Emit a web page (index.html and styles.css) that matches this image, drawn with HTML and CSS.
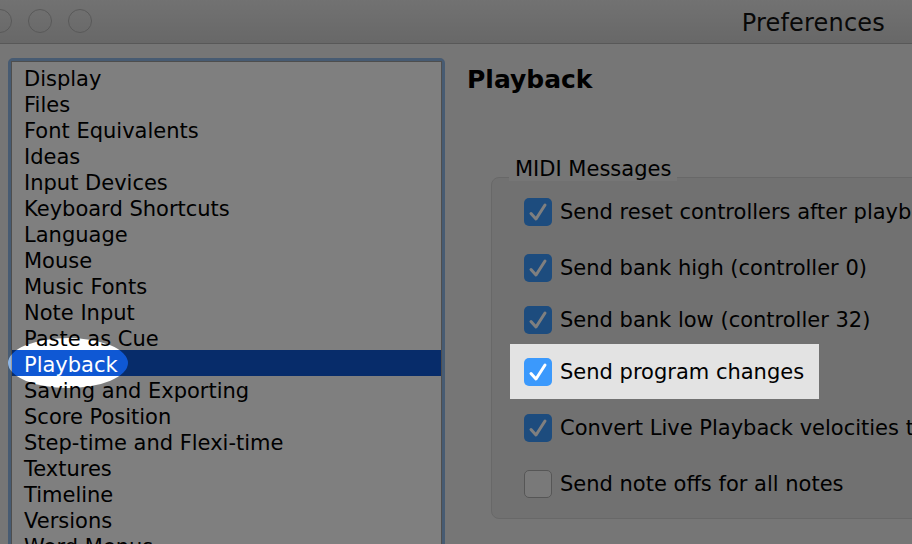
FILE: index.html
```html
<!DOCTYPE html>
<html lang="en">
<head>
  <meta charset="UTF-8">
  <meta name="viewport" content="width=device-width, initial-scale=1.0">
  <title>Preferences</title>
  <link rel="stylesheet" href="styles.css">
</head>
<body>
  <div class="window">
    <div class="titlebar">
      <div class="lights">
        <span class="light"></span>
        <span class="light"></span>
        <span class="light"></span>
      </div>
      <div class="title">Preferences</div>
    </div>

    <div class="main">
      <div class="list-ring">
        <ul class="list">
          <li>Display</li>
          <li>Files</li>
          <li>Font Equivalents</li>
          <li>Ideas</li>
          <li>Input Devices</li>
          <li>Keyboard Shortcuts</li>
          <li>Language</li>
          <li>Mouse</li>
          <li>Music Fonts</li>
          <li>Note Input</li>
          <li>Paste as Cue</li>
          <li class="selected">Playback</li>
          <li>Saving and Exporting</li>
          <li>Score Position</li>
          <li>Step-time and Flexi-time</li>
          <li>Textures</li>
          <li>Timeline</li>
          <li>Versions</li>
          <li>Word Menus</li>
        </ul>
      </div>

      <div class="pane">
        <h1>Playback</h1>
        <div class="group-label">MIDI Messages</div>
        <div class="group">
          <label class="option"><span class="check on"></span>Send reset controllers after playback</label>
          <label class="option wide"><span class="check on"></span>Send bank high (controller 0)</label>
          <label class="option"><span class="check on"></span>Send bank low (controller 32)</label>
          <label class="option"><span class="check on"></span>Send program changes</label>
          <label class="option wide"><span class="check on"></span>Convert Live Playback velocities to MIDI</label>
          <label class="option wide"><span class="check"></span>Send note offs for all notes</label>
        </div>
      </div>
    </div>
  </div>

  <!-- dim everything except the two highlighted spots -->
  <svg class="dim" width="912" height="544" viewBox="0 0 912 544">
    <path fill-rule="evenodd" d="M0 0H912V544H0Z M8 363a60 25 0 1 0 120 0a60 25 0 1 0 -120 0Z M510 344H819V399H510Z"/>
  </svg>
</body>
</html>
```

FILE: styles.css
```css
* {
  box-sizing: border-box;
  margin: 0;
  padding: 0;
}
body {
  font-family: 'DejaVu Sans', Verdana, sans-serif;
  width: 912px;
  height: 544px;
  overflow: hidden;
  background: #ececec;
  color: #000;
  position: relative;
}
.titlebar {
  height: 44px;
  display: flex;
  align-items: center;
  background: linear-gradient(#e4e4e4, #d0d0d0);
  border-bottom: 1px solid #b0b0b0;
}
.lights {
  display: flex;
  gap: 16px;
  margin-left: -12px;
  margin-top: -1px;
}
.light {
  width: 24px;
  height: 24px;
  border-radius: 50%;
  border: 1.5px solid #b2b2b2;
}
.title {
  margin-left: auto;
  padding: 3px 27px 0 0;
  font-size: 24px;
  letter-spacing: 0.2px;
  color: #111;
}
.main {
  display: flex;
  gap: 22px;
}
.list-ring {
  width: 437px;
  height: 520px;
  margin-left: 8px;
  margin-top: 14px;
  border: 3px solid #8fb6e4;
  border-radius: 5px;
  flex-shrink: 0;
}
.list {
  list-style: none;
  height: 100%;
  background: #fff;
  border: 1px solid #9c9c9c;
  padding-top: 2px;
}
.list li {
  height: 26px;
  line-height: 26px;
  padding: 2px 0 0 12px;
  font-size: 21px;
  white-space: nowrap;
}
.list li.selected {
  background: #0f58d4;
  color: #fff;
}
.pane {
  flex: 1;
  padding-top: 21px;
  white-space: nowrap;
}
.pane h1 {
  font-size: 25px;
  line-height: 30px;
  font-weight: bold;
}
.group-label {
  width: fit-content;
  position: relative;
  margin: 62px 0 -4px 42px;
  padding: 0 6px;
  font-size: 21px;
  line-height: 24px;
  background: #ececec;
}
.group {
  width: 520px;
  margin-left: 24px;
  padding: 20px 0 20px 32px;
  background: #e3e3e3;
  border: 1px solid #d0d0d0;
  border-radius: 8px;
}
.option {
  display: flex;
  align-items: center;
  gap: 8px;
  height: 28px;
  font-size: 21px;
}
.option + .option {
  margin-top: 24px;
}
.option.wide {
  margin-top: 28px;
}
.check {
  width: 28px;
  height: 28px;
  flex-shrink: 0;
  border-radius: 5px;
  background: #f2f2f2;
  border: 1px solid #acacac;
}
.check.on {
  border: none;
  background: #3b99fc url("data:image/svg+xml,%3Csvg xmlns='http://www.w3.org/2000/svg' width='28' height='28'%3E%3Cpath d='M7 15.5L12 21L21 7' fill='none' stroke='white' stroke-width='3' stroke-linecap='round' stroke-linejoin='round'/%3E%3C/svg%3E") no-repeat center;
}
.dim {
  position: absolute;
  top: 0;
  left: 0;
  pointer-events: none;
}
.dim path {
  fill: rgba(0, 0, 0, 0.5);
}
```
